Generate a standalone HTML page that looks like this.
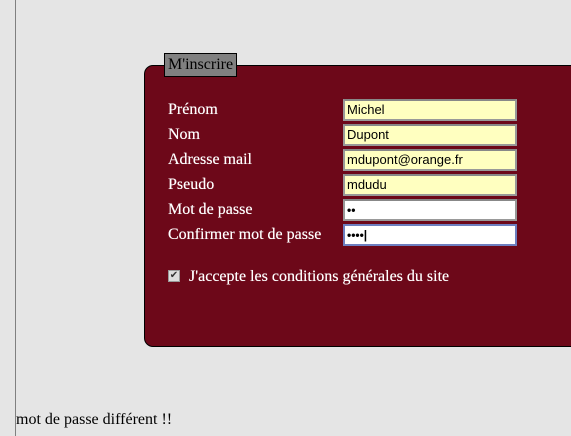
<!DOCTYPE html>
<html><head><style>
body{margin:0;width:571px;height:436px;background:#e5e5e5;position:relative;overflow:hidden;font-family:"Liberation Serif",serif;}
.vl{position:absolute;left:15px;top:0;width:1px;height:436px;background:#808080}
.box{position:absolute;left:144px;top:65px;width:440px;height:280px;background:#6d0819;border:1px solid #000;border-radius:9px;}
.leg{position:absolute;left:164px;top:53px;background:#808080;border:1px solid #000;font-size:16px;line-height:22px;color:#000;padding-left:3px;box-sizing:border-box;width:73px;height:24px}
.lab{position:absolute;left:168px;color:#fff;font-size:16px;line-height:18px;text-shadow:0 0 0.4px #fff}
.inp{position:absolute;left:343px;width:174px;height:22px;box-sizing:border-box;border:2px solid #999;border-top-color:#888;background:#ffffc0;font-family:"Liberation Sans",sans-serif;font-size:13px;line-height:18px;padding-left:2px;color:#000}
.w{background:#fff}
.cb{position:absolute;left:168px;top:270px;width:12px;height:12px;background:#ddd;border:1px solid #999;box-sizing:border-box;font-size:10px;line-height:10px;text-align:center;color:#333;font-family:"DejaVu Sans",sans-serif}
</style></head><body>
<div class="vl"></div>
<div class="box"></div>
<div class="leg">M'inscrire</div>
<div class="lab" style="top:101px">Prénom</div>
<div class="lab" style="top:126px">Nom</div>
<div class="lab" style="top:151px">Adresse mail</div>
<div class="lab" style="top:176px">Pseudo</div>
<div class="lab" style="top:201px">Mot de passe</div>
<div class="lab" style="top:226px">Confirmer mot de passe</div>
<div class="inp" style="top:99px">Michel</div>
<div class="inp" style="top:124px">Dupont</div>
<div class="inp" style="top:149px">mdupont@orange.fr</div>
<div class="inp" style="top:174px">mdudu</div>
<div class="inp w" style="top:199px;font-size:12px;font-weight:bold">••</div>
<div class="inp w" style="top:224px;border-color:#6d7fc0;font-size:12px;font-weight:bold">••••|</div>
<div class="cb">✔</div>
<div class="lab" style="left:189px;top:268px">J'accepte les conditions générales du site</div>
<div style="position:absolute;left:16px;top:411px;font-size:16px;line-height:18px;color:#000">mot de passe différent !!</div>
</body></html>
